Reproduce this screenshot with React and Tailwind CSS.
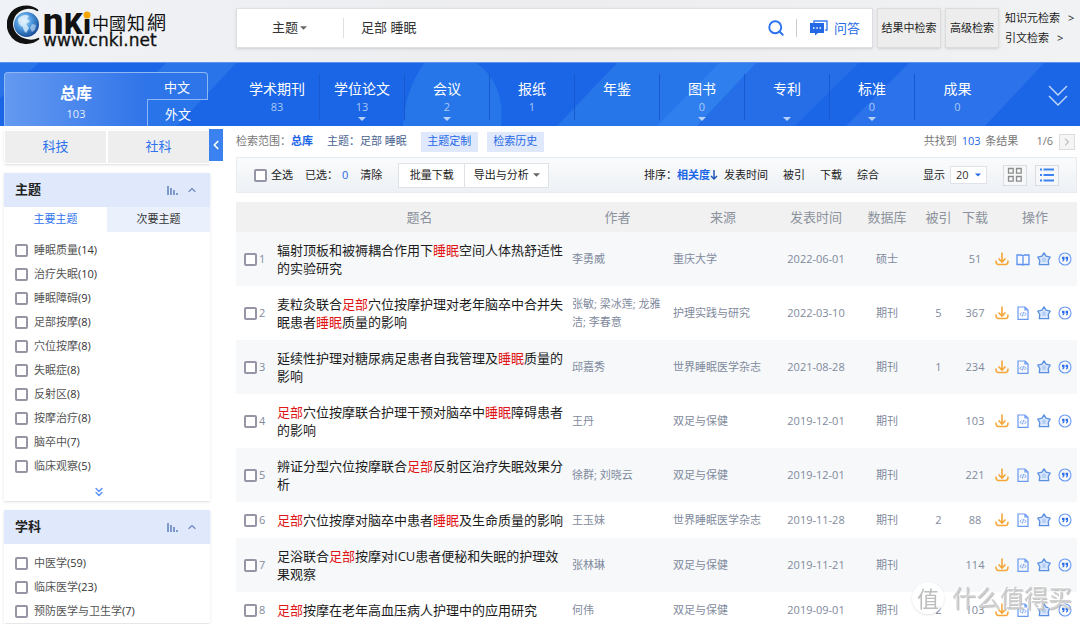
import { useState } from "react";
import { ChevronLeft, ChevronRight, ChevronUp, Search, ChevronsDown } from "lucide-react";

const navItems = [
  { name: "学术期刊", count: "83" },
  { name: "学位论文", count: "13", more: true },
  { name: "会议", count: "2", more: true },
  { name: "报纸", count: "1" },
  { name: "年鉴" },
  { name: "图书", count: "0", more: true },
  { name: "专利", more: true },
  { name: "标准", count: "0", more: true },
  { name: "成果", count: "0" },
];

const topics = [
  ["睡眠质量", 14],
  ["治疗失眠", 10],
  ["睡眠障碍", 9],
  ["足部按摩", 8],
  ["穴位按摩", 8],
  ["失眠症", 8],
  ["反射区", 8],
  ["按摩治疗", 8],
  ["脑卒中", 7],
  ["临床观察", 5],
];

const subjects = [
  ["中医学", 59],
  ["临床医学", 23],
  ["预防医学与卫生学", 7],
];

const papers = [
  { title: "辐射顶板和被褥耦合作用下睡眠空间人体热舒适性的实验研究", author: "李勇威", source: "重庆大学", date: "2022-06-01", db: "硕士", cited: "", downloads: 51, book: true },
  { title: "麦粒灸联合足部穴位按摩护理对老年脑卒中合并失眠患者睡眠质量的影响", author: "张敏; 梁冰莲; 龙雅洁; 李春意", source: "护理实践与研究", date: "2022-03-10", db: "期刊", cited: 5, downloads: 367 },
  { title: "延续性护理对糖尿病足患者自我管理及睡眠质量的影响", author: "邱嘉秀", source: "世界睡眠医学杂志", date: "2021-08-28", db: "期刊", cited: 1, downloads: 234 },
  { title: "足部穴位按摩联合护理干预对脑卒中睡眠障碍患者的影响", author: "王丹", source: "双足与保健", date: "2019-12-01", db: "期刊", cited: "", downloads: 103 },
  { title: "辨证分型穴位按摩联合足部反射区治疗失眠效果分析", author: "徐群; 刘晓云", source: "双足与保健", date: "2019-12-01", db: "期刊", cited: "", downloads: 221 },
  { title: "足部穴位按摩对脑卒中患者睡眠及生命质量的影响", author: "王玉妹", source: "世界睡眠医学杂志", date: "2019-11-28", db: "期刊", cited: 2, downloads: 88 },
  { title: "足浴联合足部按摩对ICU患者便秘和失眠的护理效果观察", author: "张林琳", source: "双足与保健", date: "2019-11-21", db: "期刊", cited: "", downloads: 114 },
  { title: "足部按摩在老年高血压病人护理中的应用研究", author: "何伟", source: "双足与保健", date: "2019-09-01", db: "期刊", cited: 2, downloads: 103 },
];

function Checkbox(props) {
  return (
    <input
      type="checkbox"
      className="h-[13px] w-[13px] shrink-0 appearance-none rounded-[2px] border-2 border-[#9695a6] bg-white checked:bg-[#2d72ee]"
      {...props}
    />
  );
}

function Caret({ className }) {
  return (
    <svg viewBox="0 0 8 4" className={className} fill="currentColor" aria-hidden="true">
      <path d="M0 0h8L4 4z" />
    </svg>
  );
}

function Logo() {
  return (
    <svg viewBox="0 -4 164 50" className="h-[50px] w-[164px]" role="img" aria-label="中国知网">
      <defs>
        <radialGradient id="globe" cx="0.4" cy="0.35" r="0.7">
          <stop offset="0" stopColor="#cfe9fb" />
          <stop offset="0.45" stopColor="#4f9ade" />
          <stop offset="1" stopColor="#12448f" />
        </radialGradient>
      </defs>
      <path d="M31 6.500C23-.5 8 1 2.500 12-3 24 4 37 17 39c6 .8 11-1 15-4.500-5 2.500-10 2.500-14.500.8C7 32 2.500 22 7 13 11 4.500 22 1.500 31 6.500z" fill="#111" stroke="#111" strokeWidth="1.600" />
      <circle cx="19.500" cy="20.500" r="12.500" fill="url(#globe)" />
      <path d="M11 15c3-4 8-5 11-3l-2 3 3 2-4 3 3 4-3 5c-2-2-3-4-3-6-3-1-5-4-5-8z" fill="#e8f5fd" opacity="0.75" />
      <path d="M25 20l4 1-1 5-3 2-2-4z" fill="#cfe5f8" opacity="0.6" />
      <g fill="#111">
        <text x="36" y="30" fontFamily="Roboto" fontWeight="900" fontSize="36">n</text>
        <text x="57" y="30" fontFamily="Roboto" fontWeight="900" fontSize="29">K</text>
        <text x="76" y="30" fontFamily="Roboto" fontWeight="900" fontSize="28">ı</text>
        <text x="85" y="26" fontFamily="Noto Sans CJK TC" fontSize="17">中</text>
        <text x="102" y="26" fontFamily="Noto Sans CJK TC" fontSize="17">國</text>
        <text x="120" y="26" fontFamily="Noto Sans CJK TC" fontSize="18">知</text>
        <text x="140" y="26" fontFamily="Noto Sans CJK TC" fontSize="19">網</text>
        <text x="36" y="42" fontFamily="DejaVu Sans" fontSize="17" stroke="#111" strokeWidth="0.300">www.cnki.net</text>
      </g>
      <circle cx="80" cy="11" r="3.500" fill="#f7a600" />
    </svg>
  );
}

function ChatIcon() {
  return (
    <svg viewBox="0 0 19 16" className="h-4 w-[19px]" fill="none" aria-hidden="true">
      <path d="M5 3V1h13v9h-2" stroke="#3b7cf0" strokeWidth="1.400" />
      <path d="M1 3h14v10H9l-3 2.500V13H1z" fill="#2468e6" />
      <path d="M4 8h1.500M7.300 8h1.500M10.500 8H12" stroke="#fff" strokeWidth="1.500" />
    </svg>
  );
}

function StatsIcon() {
  return (
    <svg viewBox="0 0 11 10" className="h-[10px] w-[11px]" fill="#7d9acb" aria-hidden="true">
      <path d="M0 1h2v9H0zM3 3h2v7H3zM6 5h2v5H6zM9 8h2v2H9z" />
    </svg>
  );
}

function DownloadIcon() {
  return (
    <svg viewBox="0 0 14 14" className="h-[14px] w-[14px]" fill="none" stroke="#f5a637" strokeWidth="1.600" aria-hidden="true">
      <path d="M7 .5v9.500M3.500 6.500L7 10l3.500-3.500M1 8.500c0 2 .3 4 2.300 4h7.400c2 0 2.300-2 2.300-4" />
    </svg>
  );
}

function BookIcon() {
  return (
    <svg viewBox="0 0 14 14" className="h-[14px] w-[14px]" fill="none" stroke="#5b91ef" strokeWidth="1.300" aria-hidden="true">
      <path d="M1 3h4.500L7 4l1.500-1H13v9.500H8.500L7 13l-1.500-.5H1zM7 4v9" />
    </svg>
  );
}

function HtmlIcon() {
  return (
    <svg viewBox="0 0 14 14" className="h-[14px] w-[14px]" fill="none" stroke="#6a9af0" strokeWidth="1.200" aria-hidden="true">
      <path d="M2 1h7l3 3v9.300H2zM9 1v3h3" />
      <path d="M5.500 6.500L4 8.300 5.500 10M8.500 6.500L10 8.300 8.500 10M7.500 6l-1 4.500" strokeWidth="0.900" />
    </svg>
  );
}

function StarIcon() {
  return (
    <svg viewBox="0 0 14 14" className="h-[14px] w-[14px]" fill="#dbe8fb" stroke="#5a8fdf" strokeWidth="1.300" strokeLinejoin="round" aria-hidden="true">
      <path d="M7 .9l2 3.300 4.200.9-2 3.400.5 4.200H2.300l.5-4.200-2-3.400 4.200-.9z" />
      <path d="M7 4.500l1 1.700 1.900.4-1.300 1.400.2 1.900H5.200L5.400 8 4.100 6.600 6 6.200z" fill="#b4cef5" stroke="none" />
    </svg>
  );
}

function QuoteIcon() {
  return (
    <svg viewBox="0 0 14 14" className="h-[14px] w-[14px]" fill="none" aria-hidden="true">
      <circle cx="7" cy="7" r="6" stroke="#6a9af2" strokeWidth="1.100" />
      <path d="M4 4.700h2.500v2.500C6.500 8.500 5.800 9.300 4.400 9.600v-1c.6-.3.900-.8.900-1.400H4zM7.600 4.700h2.500v2.500c0 1.300-.7 2.100-2.100 2.400v-1c.6-.3.9-.8.9-1.400H7.600z" fill="#2f70ea" />
    </svg>
  );
}

function Highlighted({ text }) {
  return text.split(/(足部|睡眠)/).map((part, i) =>
    part === "足部" || part === "睡眠" ? (
      <em key={i} className="text-[#e01515] not-italic">{part}</em>
    ) : (
      part
    )
  );
}

function TopBar() {
  return (
    <header className="flex h-[62px] items-start bg-linear-to-r from-[#eff2f6] via-[#ededef] to-[#f1f2f3] pt-2 pl-[7px]">
      <a href="#" className="-mt-2 w-[229px] shrink-0"><Logo /></a>
      <form className="flex h-10 min-w-0 flex-1 items-center border border-[#dedfe2] bg-white shadow-sm" onSubmit={(e) => e.preventDefault()}>
        <div className="flex w-[107px] shrink-0 items-center justify-end border-r border-[#dfdfdf] pr-9">
          <select aria-label="检索字段" className="w-9 appearance-none bg-transparent text-[13px] text-[#333]">
            <option>主题</option>
          </select>
          <Caret className="-ml-2 h-1 w-[7px] text-[#666]" />
        </div>
        <input aria-label="检索词" defaultValue="足部 睡眠" className="min-w-0 flex-1 pl-[17px] text-[13px] text-[#333] outline-none" />
        <button type="submit" aria-label="检索" className="pr-[11px]">
          <Search className="h-[18px] w-[18px] text-[#2b72f0]" strokeWidth={2.5} />
        </button>
        <button type="button" className="flex items-center gap-[6px] border-l border-[#ccc] pr-3 pl-3 text-[13px] leading-[18px] text-[#2468e6]">
          <ChatIcon />
          问答
        </button>
      </form>
      <button className="ml-1 h-10 w-16 shrink-0 border border-[#dcdcdc] bg-[#ededed] text-[11px] text-[#222] shadow-sm">结果中检索</button>
      <button className="ml-1 h-10 w-[54px] shrink-0 border border-[#dcdcdc] bg-[#ededed] text-[11px] text-[#222] shadow-sm">高级检索</button>
      <div className="flex w-[81px] shrink-0 flex-col pl-[6px] text-[11px] leading-5 text-[#222]">
        <a href="#" className="flex gap-2">知识元检索 <span>&gt;</span></a>
        <a href="#" className="flex gap-2">引文检索 <span>&gt;</span></a>
      </div>
    </header>
  );
}

function NavBackground() {
  return (
    <svg viewBox="0 0 1080 64" preserveAspectRatio="none" className="absolute inset-0 h-full w-full" aria-hidden="true">
      <path d="M0 0h1080v64H0z" fill="#1b66e6" />
      <path d="M0 0h40L0 36z" fill="#2a74ea" />
      <path d="M167 0h70l-60 64h-75z" fill="#2a74ea" />
      <path d="M403 64c1-22 8-45 22-64h50c20 14 29 34 26 64z" fill="#2676ea" />
      <path d="M618 0h140l-60 64H557z" fill="#2676ea" />
      <path d="M720 0h37l-60 64h-40z" fill="#2f80ee" />
      <path d="M757 0h103l-65 64h-98z" fill="#266de8" />
      <path d="M910 0h135l-60 64H846z" fill="#2c72ea" />
      <path d="M0 0h1080v1H0z" fill="#5b93ee" />
    </svg>
  );
}

function DatabaseNav() {
  return (
    <nav className="relative h-16 bg-[#1b66e6] text-white">
      <NavBackground />
      <div className="relative flex h-full">
        <div className="mt-[10px] ml-1 flex w-[204px] shrink-0">
          <a href="#" className="flex flex-1 flex-col items-center rounded-tl border-t border-l border-[#8fb6f5] bg-linear-to-r from-[#6499f0] to-[#2f74e9] pt-[9px]">
            <span className="text-base leading-[22px] font-bold">总库</span>
            <span className="text-[11px] leading-5 text-[#e3edfd]">103</span>
          </a>
          <div className="flex w-[61px] flex-col text-center text-[13px] leading-7">
            <a href="#" className="h-7 rounded-tr border-t border-r border-b border-[#8fb6f5] bg-[#2f75ea]">中文</a>
            <a href="#" className="h-[26px] border-l border-[#8fb6f5]">外文</a>
          </div>
        </div>
        <ul className="ml-[27px] grid flex-1 grid-cols-9 pt-3">
          {navItems.map((item, i) => (
            <li key={item.name} className={`h-[46px] ${i < 8 ? "border-r border-[#1759cf]" : ""}`}>
              <a href="#" className="flex flex-col items-center pt-1">
                <span className="text-sm leading-[22px]">{item.name}</span>
                <span className="h-[14px] text-[11px] leading-[14px] text-[#a9c8f8]">{item.count}</span>
                {item.more && <Caret className="mt-[3px] h-1 w-2 text-[#b8d1f8]" />}
              </a>
            </li>
          ))}
        </ul>
        <button aria-label="展开" className="w-20 shrink-0 pt-1 pl-12">
          <svg viewBox="0 0 20 24" className="h-6 w-5" fill="none" stroke="#c5dafa" strokeWidth="1.400" aria-hidden="true">
            <path d="M1 2l9 9 9-9M1 12l9 9 9-9" />
          </svg>
        </button>
      </div>
    </nav>
  );
}

function FacetHeader({ title }) {
  return (
    <div className="flex h-[34px] items-center bg-[#e0e9fb] pr-3 pl-[11px]">
      <h2 className="flex-1 text-[13px] font-bold text-[#222]">{title}</h2>
      <StatsIcon />
      <button aria-label={`收起${title}`} className="ml-2"><ChevronUp className="h-3 w-3 text-[#6f8dc4]" strokeWidth={2.5} /></button>
    </div>
  );
}

function FacetList({ items }) {
  return (
    <ul className="pl-[11px] text-[11px] leading-6 text-[#555]">
      {items.map(([name, count]) => (
        <li key={name}>
          <label className="flex items-center gap-[6px]">
            <Checkbox />
            <span>{name}<span className="text-[#333]">({count})</span></span>
          </label>
        </li>
      ))}
    </ul>
  );
}

function Sidebar() {
  const [tab, setTab] = useState("主要主题");

  return (
    <aside className="w-[210px] shrink-0 pt-1 pl-1">
      <div className="grid grid-cols-2 gap-[2px] bg-white p-[1px] shadow-sm">
        <button className="h-8 bg-[#eee] text-[13px] text-[#2d72ee]">科技</button>
        <button className="h-8 bg-[#eee] text-[13px] text-[#2d72ee]">社科</button>
      </div>

      <section className="mt-[9px] bg-white shadow-sm">
        <FacetHeader title="主题" />
        <div className="mb-[6px] grid grid-cols-2">
          {["主要主题", "次要主题"].map((name) => (
            <button
              key={name}
              onClick={() => setTab(name)}
              className={`h-[25px] text-[11px] ${tab === name ? "bg-white text-[#2d72ee]" : "bg-[#eaf0fc] text-[#333]"}`}
            >
              {name}
            </button>
          ))}
        </div>
        <FacetList items={topics} />
        <div className="flex h-[23px] items-end justify-center pr-4 pb-[2px]">
          <button aria-label="更多"><ChevronsDown className="h-[14px] w-[14px] text-[#5b93f2]" strokeWidth={2.5} /></button>
        </div>
      </section>

      <section className="mt-[9px] bg-white shadow-sm">
        <FacetHeader title="学科" />
        <div className="pt-[7px]">
          <FacetList items={subjects} />
        </div>
      </section>
    </aside>
  );
}

function Summary() {
  return (
    <div className="flex h-[31px] items-center text-[11px] text-[#777]">
      <span>检索范围：</span>
      <a href="#" className="font-bold text-[#1b66e6]">总库</a>
      <span className="ml-[14px] text-[#4a6390]">主题：足部 睡眠</span>
      <button className="ml-[14px] h-5 w-[57px] bg-[#e0e9fb] text-[#2468e6]">主题定制</button>
      <button className="ml-[9px] h-5 w-[57px] bg-[#e0e9fb] text-[#2468e6]">检索历史</button>
      <span className="ml-auto">共找到 <b className="px-[2px] font-normal text-[#2468e6]">103</b> 条结果</span>
      <span className="ml-[18px]">1/6</span>
      <button aria-label="下一页" className="mr-[2px] ml-[6px] flex h-4 w-4 items-center justify-center border border-[#ddd] bg-[#f5f5f5]">
        <ChevronRight className="h-3 w-3 text-[#999]" />
      </button>
    </div>
  );
}

function Toolbar() {
  return (
    <div className="flex h-9 items-center border border-[#e8ecf0] bg-linear-to-b from-[#fafbfc] to-[#edf1f5] pr-[17px] pl-[17px] text-[11px] text-[#222]">
      <label className="flex items-center gap-1"><Checkbox />全选</label>
      <span className="ml-3">已选：<b className="ml-1 font-normal text-[#2468e6]">0</b></span>
      <button className="ml-3">清除</button>
      <button className="ml-4 h-[25px] w-[67px] border border-[#dfe2e6] bg-white">批量下载</button>
      <button className="-ml-[1px] flex h-[25px] w-[85px] items-center justify-center gap-1 border border-[#dfe2e6] bg-white">
        导出与分析
        <Caret className="h-1 w-[7px] text-[#666]" />
      </button>

      <span className="ml-auto">排序：</span>
      <button className="flex items-center font-bold text-[#1b66e6]">
        相关度
        <svg viewBox="0 0 8 12" className="h-3 w-2" fill="none" stroke="#2458b8" strokeWidth="1.500" aria-hidden="true">
          <path d="M4 1v9M1 7l3 3 3-3" />
        </svg>
      </button>
      <button className="ml-[6px]">发表时间</button>
      <button className="ml-[15px]">被引</button>
      <button className="ml-[15px]">下载</button>
      <button className="ml-[15px]">综合</button>

      <label htmlFor="pageSize" className="ml-11">显示</label>
      <select id="pageSize" className="ml-[5px] h-[18px] w-[37px] appearance-none border border-[#e0e3e8] bg-white pl-[5px] text-[11px] leading-4 text-[#333]">
        <option>20</option>
        <option>50</option>
      </select>
      <Caret className="pointer-events-none -ml-3 h-1 w-[6px] text-[#2468e6]" />
      <button aria-label="图文" className="ml-[22px] flex h-[21px] w-6 items-center justify-center border border-[#d9dce0] bg-[#f7f8f9]">
        <svg viewBox="0 0 16 16" className="h-4 w-4" fill="none" stroke="#8b8b8b" strokeWidth="1.300" aria-hidden="true">
          <path d="M1.500 1.500h4.700v4.700H1.500zM9.500 1.500h4.700v4.700H9.500zM1.500 9.500h4.700v4.700H1.500zM9.500 9.500h4.700v4.700H9.500z" />
        </svg>
      </button>
      <button aria-label="列表" className="ml-2 flex h-[21px] w-6 items-center justify-center border border-[#d9dce0] bg-[#f7f8f9]">
        <svg viewBox="0 0 16 16" className="h-4 w-4" fill="none" stroke="#3f82f3" strokeWidth="2" aria-hidden="true">
          <path d="M1 2.500h2M4.500 2.500H15M1 8h2M4.500 8H15M1 13.500h2M4.500 13.500H15" />
        </svg>
      </button>
    </div>
  );
}

function ResultTable() {
  return (
    <table className="mt-[9px] w-full table-fixed text-[11px] leading-[18px] text-[#7f8a9d]">
      <colgroup>
        <col className="w-9" />
        <col />
        <col className="w-[101px]" />
        <col className="w-[110px]" />
        <col className="w-[76px]" />
        <col className="w-[66px]" />
        <col className="w-[37px]" />
        <col className="w-9" />
        <col className="w-[84px]" />
      </colgroup>
      <thead>
        <tr className="h-[30px] bg-[#f1f1f1] text-[13px] text-[#8c929d] *:font-normal">
          <th></th>
          <th>题名</th>
          <th>作者</th>
          <th>来源</th>
          <th>发表时间</th>
          <th>数据库</th>
          <th>被引</th>
          <th>下载</th>
          <th>操作</th>
        </tr>
      </thead>
      <tbody>
        {papers.map((paper, index) => (
          <tr key={paper.title} className="odd:bg-[#f6f8fa]">
            <td className="pl-2">
              <label className="flex items-center gap-[2px]"><Checkbox />{index + 1}</label>
            </td>
            <td className="py-[9px] pl-[5px] text-[13px]">
              <a href="#" className="text-[#1c1c1c]"><Highlighted text={paper.title} /></a>
            </td>
            <td className="pr-1 pl-[5px]">{paper.author}</td>
            <td className="pl-[5px]">{paper.source}</td>
            <td className="text-center whitespace-nowrap">{paper.date}</td>
            <td className="text-center">{paper.db}</td>
            <td className="text-center">{paper.cited}</td>
            <td className="text-center">{paper.downloads}</td>
            <td className="pl-[2px]">
              <div className="flex gap-[7px]">
                <button aria-label="下载"><DownloadIcon /></button>
                <button aria-label="阅读">{paper.book ? <BookIcon /> : <HtmlIcon />}</button>
                <button aria-label="收藏"><StarIcon /></button>
                <button aria-label="引用"><QuoteIcon /></button>
              </div>
            </td>
          </tr>
        ))}
      </tbody>
    </table>
  );
}

function Watermark() {
  return (
    <div className="pointer-events-none fixed right-2 bottom-[10px] flex items-center gap-2 text-[#d0d0d0]">
      <span className="flex h-8 w-8 items-center justify-center rounded-full bg-white/90 text-[22px] leading-8 text-[#bdbdbd] shadow-sm">值</span>
      <span className="text-2xl [text-shadow:-1px_-1px_0_#fff,1px_1px_1px_#bbb]">什么值得买</span>
    </div>
  );
}

export default function App() {
  return (
    <div lang="zh-CN" className="h-screen overflow-hidden bg-white font-['Open_Sans','Noto_Sans_CJK_SC',sans-serif]">
      <TopBar />
      <DatabaseNav />
      <div className="flex items-start">
        <Sidebar />
        <button aria-label="收起侧栏" className="mt-[3px] -ml-[1px] flex h-8 w-[14px] shrink-0 items-center justify-center bg-[#3b82f0]">
          <ChevronLeft className="h-[14px] w-[14px] text-white" strokeWidth={3} />
        </button>
        <main className="mr-[3px] ml-[13px] min-w-0 flex-1">
          <Summary />
          <Toolbar />
          <ResultTable />
        </main>
      </div>
      <Watermark />
    </div>
  );
}
